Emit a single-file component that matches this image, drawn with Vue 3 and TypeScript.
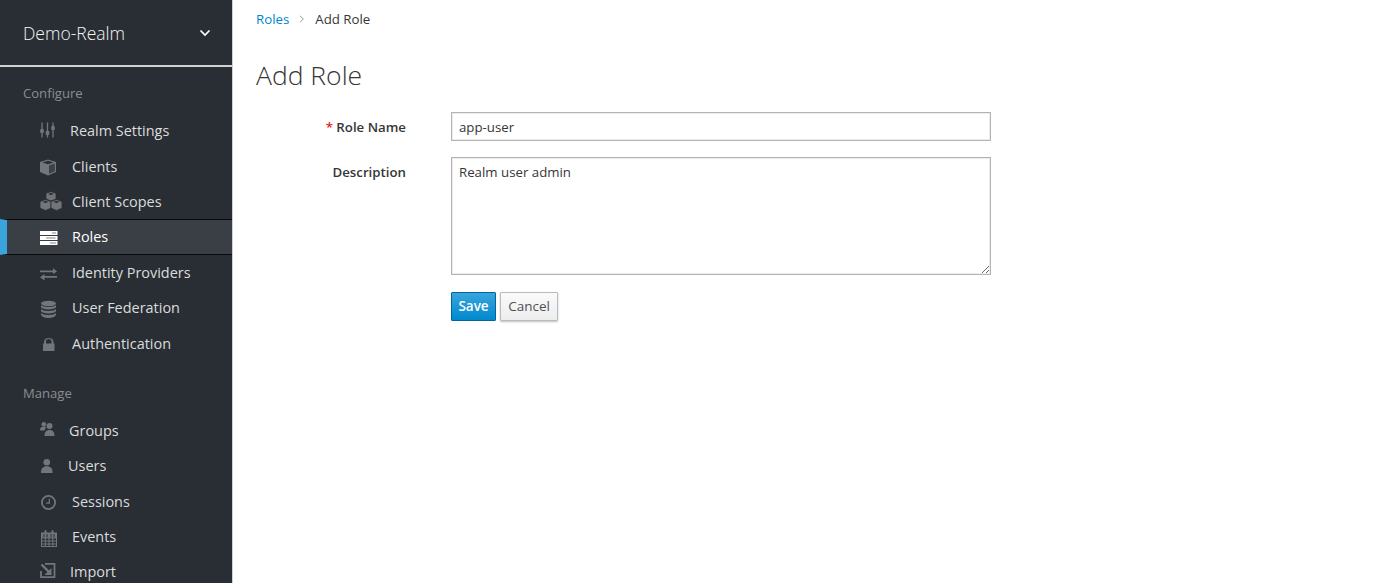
<template>
  <div class="page">
    <aside class="sidebar">
      <div class="realm">
        <span>Demo-Realm</span>
        <svg class="chevron" width="12" height="8" viewBox="0 0 12 8">
          <path d="M1.5 1.5 6 6l4.500-4.500" fill="none" stroke="#fff" stroke-width="1.7" />
        </svg>
      </div>

      <div v-for="section in sections" :key="section.title" class="section">
        <h2 class="section-title">{{ section.title }}</h2>
        <ul class="menu">
          <li v-for="item in section.items" :key="item.label" class="menu-item" :class="{ active: item.label === 'Roles' }">
            <span class="icon" :style="{ width: item.width + 'px' }">
              <svg width="22" height="22" viewBox="0 0 22 22" v-html="icons[item.icon]"></svg>
            </span>
            <span>{{ item.label }}</span>
          </li>
        </ul>
      </div>
    </aside>

    <main class="content">
      <nav class="crumbs">
        <a href="#" class="crumb-link">Roles</a>
        <svg class="crumb-sep" width="6" height="8" viewBox="0 0 6 8">
          <path d="M1 .8 4.400 4 1 7.200" fill="none" stroke="#9c9c9c" stroke-width="1" />
        </svg>
        <span>Add Role</span>
      </nav>

      <h1 class="title">Add Role</h1>

      <form class="form" @submit.prevent>
        <label class="label" for="role-name"><span class="req">*</span> Role Name</label>
        <input id="role-name" v-model="roleName" class="field" type="text" />

        <label class="label label-desc" for="role-desc">Description</label>
        <textarea id="role-desc" v-model="description" class="field area"></textarea>

        <div class="actions">
          <button class="btn save" type="submit">Save</button>
          <button class="btn cancel" type="button">Cancel</button>
        </div>
      </form>
    </main>
  </div>
</template>

<script setup lang="ts">
import { ref } from 'vue'

interface MenuItem {
  label: string
  icon: string
  width: number
}

const roleName = ref('app-user')
const description = ref('Realm user admin')

const sections: { title: string; items: MenuItem[] }[] = [
  {
    title: 'Configure',
    items: [
      { label: 'Realm Settings', icon: 'sliders', width: 30 },
      { label: 'Clients', icon: 'cube', width: 32 },
      { label: 'Client Scopes', icon: 'cubes', width: 32 },
      { label: 'Roles', icon: 'roles', width: 32 },
      { label: 'Identity Providers', icon: 'exchange', width: 32 },
      { label: 'User Federation', icon: 'database', width: 32 },
      { label: 'Authentication', icon: 'lock', width: 32 }
    ]
  },
  {
    title: 'Manage',
    items: [
      { label: 'Groups', icon: 'users', width: 29 },
      { label: 'Users', icon: 'user', width: 28 },
      { label: 'Sessions', icon: 'clock', width: 32 },
      { label: 'Events', icon: 'calendar', width: 32 },
      { label: 'Import', icon: 'import', width: 30 }
    ]
  }
]

const grey = '#72767b'
const bg = '#292e34'

// icons are drawn on a 22px box whose middle sits on the row's middle
const icons: Record<string, string> = {
  sliders: `<g stroke="${grey}" stroke-width="1.300"><path d="M2 2.500v15M7.500 2.500v15M13 2.500v15"/></g>
    <g fill="${grey}"><rect x=".2" y="9" width="3.600" height="4" rx="1"/><rect x="5.700" y="11" width="3.600" height="4" rx="1"/><rect x="11.200" y="6" width="3.600" height="4" rx="1"/></g>`,
  cube: `<path fill="${grey}" d="M8 4.500 16 7v10l-8 3.500L0 17V7Z"/><path fill="${bg}" d="M8 5.800 13.600 7.500 8 9.300 2.400 7.500Z"/><path fill="#3d4147" d="M9 10.400 14.800 8.500v7.700L9 18.800Z"/>`,
  cubes: `<g fill="${grey}" stroke="${bg}" stroke-width=".8"><path d="M11 1.500 16 3.300v5.800L11 11 6 9.100V3.300Z"/><path d="M5.500 9.500 11 11.500v6.700L5.500 20.500 0 18.200v-6.700Z"/><path d="M16.500 9.500 22 11.500v6.700L16.500 20.500 11 18.200v-6.700Z"/></g>
    <g fill="${bg}"><path d="M11 2.800 14 3.900 11 5 8 3.900Z"/><path d="M5.500 10.800 8.500 11.900 5.500 13 2.500 11.900Z"/><path d="M16.500 10.800 19.500 11.900 16.500 13 13.500 11.900Z"/></g>`,
  roles: `<g fill="#fff"><rect y="5" width="17.500" height="4"/><rect y="10" width="17.500" height="4"/><rect y="15" width="17.500" height="4"/></g>
    <g fill="#888"><rect x="12" y="6.500" width="4" height="1"/><rect x="6" y="11.500" width="9.500" height="1"/><rect x="10" y="16.500" width="6" height="1"/></g>`,
  exchange: `<g fill="${grey}"><path d="M0 9.500h13V7l4 3.500-4 2.500v-1.700H0Z"/><path d="M17 15H4.500v-2L0 16.300 4.500 19.500v-2.700H17Z"/></g>`,
  database: `<g fill="${grey}"><ellipse cx="8.500" cy="6.500" rx="7.500" ry="2.800"/><path d="M1 8c1.500 2.600 13.500 2.600 15 0v2.300c-1.500 2.800-13.500 2.800-15 0Z"/><path d="M1 12c1.500 2.600 13.500 2.600 15 0v2.300c-1.500 2.800-13.500 2.800-15 0Z"/><path d="M1 16c1.500 2.600 13.500 2.600 15 0v1.700c-1.500 4.400-13.500 4.400-15 0Z"/></g>`,
  lock: `<path fill="${grey}" d="M3 11.500h1v-1.800a4.800 4.300 0 0 1 9.500 0v1.800h1v7.500H3Zm3 0h5.500v-1.800a2.750 2.600 0 0 0-5.500 0Z"/>`,
  users: `<g fill="${grey}"><circle cx="3.800" cy="5.300" r="2.300"/><path d="M0 11.500c0-3 1.300-4 3.800-4 1 0 2 .3 2.600.8-1.100.8-1.600 1.900-1.600 3.200Z"/><circle cx="9.500" cy="7" r="3"/><path d="M4.500 17c0-4 1.700-6 5-6s5 2 5 6Z"/></g>`,
  user: `<g fill="${grey}"><circle cx="6.800" cy="7.300" r="3.300"/><path d="M1 18c0-4.500 1.800-6.700 5.800-6.700s5.800 2.200 5.800 6.700Z"/></g>`,
  clock: `<g fill="none" stroke="${grey}"><circle cx="8.500" cy="12.500" r="6.600" stroke-width="1.800"/><path d="M9.300 8.800V13.200H6" stroke-width="1.300"/></g>`,
  calendar: `<g fill="none" stroke="${grey}"><rect x="1.500" y="7" width="15" height="13.500"/><path d="M1.500 12h15M1.500 15h15M1.500 18h15M5.300 11v9M9 11v9M12.800 11v9"/></g><g fill="${grey}"><rect x="1.500" y="7" width="15" height="4.500"/><rect x="4.500" y="4" width="2" height="5" rx="1"/><rect x="11.500" y="4" width="2" height="5" rx="1"/></g><g fill="${bg}"><rect x="3.500" y="8" width="1" height="3"/><rect x="10.500" y="8" width="1" height="3"/><rect x="6.500" y="8" width="1" height="3"/><rect x="13.500" y="8" width="1" height="3"/></g>`,
  import: `<g fill="none" stroke="${grey}" stroke-width="1.800"><path d="M1 10v6.200h13.500V2.900H5"/><path d="M1.500 3.500 9 11" stroke-width="2.400"/></g><path fill="${grey}" d="M11.500 7v7h-7z"/>`
}
</script>

<style>
html,
body {
  height: 100%;
  margin: 0;
  overflow: hidden;
}
</style>

<style scoped>
.page {
  display: flex;
  height: 583px;
  overflow: hidden;
  font-family: "Open Sans", "Liberation Sans", sans-serif;
  font-size: 13.250px;
  color: #363636;
  background: #fff;
}

.sidebar {
  flex: 0 0 233px;
  box-sizing: border-box;
  height: 583px;
  overflow: hidden;
  background: #292e34;
  border-right: 1px solid #d1d1d1;
  color: #dbdcdd;
  font-size: 14.450px;
}

.realm {
  display: flex;
  align-items: center;
  justify-content: space-between;
  box-sizing: border-box;
  height: 67px;
  padding: 0 21px 0 23px;
  border-bottom: 2px solid #d1d1d1;
  font-size: 17.500px;
  font-weight: 300;
  color: #f5f5f5;
}

.section {
  margin-bottom: 6px;
}

.section-title {
  margin: 0;
  padding: 16px 0 10px 23px;
  font-size: 13.100px;
  font-weight: 400;
  line-height: 20px;
  color: #8b8d8f;
}

.menu {
  margin: 0;
  padding: 0;
  list-style: none;
}

.menu-item {
  display: flex;
  align-items: center;
  box-sizing: border-box;
  height: 35.400px;
  padding-left: 40px;
}

.menu-item.active {
  background: #393f44;
  border-top: 1px solid #090a0b;
  border-bottom: 1px solid #090a0b;
  border-left: 7px solid #39a5dc;
  padding-left: 33px;
  color: #fff;
}

.icon {
  display: flex;
  align-items: center;
  flex: none;
}

.content {
  flex: 1;
  padding-left: 23px;
}

.crumbs {
  display: flex;
  align-items: center;
  gap: 10px;
  height: 20px;
  margin-top: 9px;
  line-height: 20px;
}

.crumb-link {
  color: #0088ce;
  text-decoration: none;
}

.title {
  margin: 23px 0 0;
  font-size: 26.500px;
  font-weight: 300;
  line-height: 46px;
  color: #363636;
}

.form {
  display: grid;
  grid-template-columns: 150px 540px;
  column-gap: 45px;
  row-gap: 16px;
  margin-top: 14px;
}

.label {
  justify-self: end;
  align-self: center;
  font-weight: 600;
}

.label-desc {
  align-self: start;
  padding-top: 6px;
}

.req {
  color: #e21b1b;
}

.field {
  box-sizing: border-box;
  width: 540px;
  height: 29px;
  padding: 0 7px;
  border: 1px solid #b4b4b4;
  border-radius: 0;
  outline: none;
  box-shadow: inset 0 0 0 1px rgba(180, 180, 180, 0.25);
  font: inherit;
  color: #363636;
}

.area {
  display: block;
  height: 118px;
  padding: 5px 7px;
  resize: vertical;
}

.actions {
  grid-column: 2;
  display: flex;
  gap: 4px;
  margin-top: 1px;
}

.btn {
  box-sizing: border-box;
  height: 29px;
  padding: 0;
  border: 1px solid;
  border-radius: 1px;
  font: inherit;
  font-size: 13.500px;
  line-height: 1;
}

.save {
  width: 45px;
  border-color: #00659c;
  background: linear-gradient(#39a5dc, #0088ce);
  color: #fff;
  font-weight: 600;
}

.cancel {
  width: 58px;
  border-color: #bbb;
  background: linear-gradient(#fafafa, #ededed);
  box-shadow: 0 1px 2px rgba(3, 3, 3, 0.25);
  color: #4d5258;
}
</style>
